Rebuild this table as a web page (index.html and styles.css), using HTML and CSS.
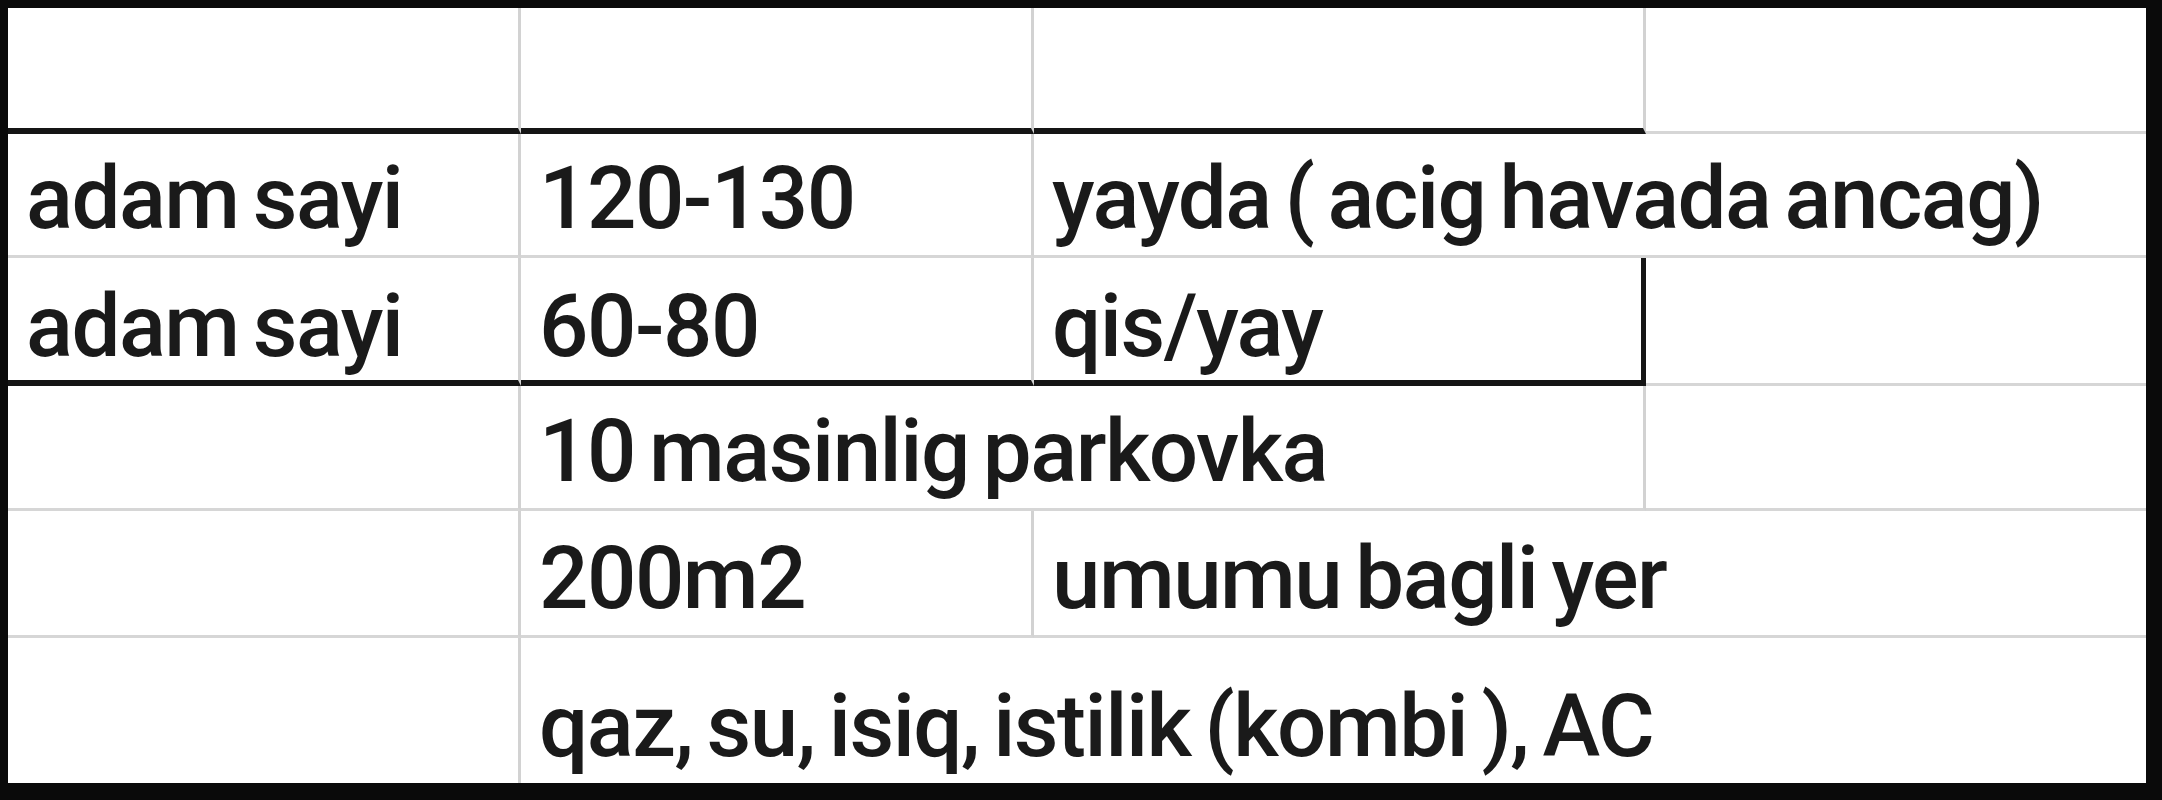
FILE: index.html
```html
<!DOCTYPE html>
<html>
<head>
<meta charset="utf-8">
<link rel="stylesheet" href="styles.css">
</head>
<body>
<div class="frame">
  <div class="sheet">
    <!-- row 1 -->
    <div class="cell r1 c1 vr"></div>
    <div class="cell r1 c2 vr"></div>
    <div class="cell r1 c3 vr"></div>
    <div class="cell r1 c4 gb"></div>
    <!-- row 2 -->
    <div class="cell r2 vr gb"><span>adam sayi</span></div>
    <div class="cell r2 vr gb"><span>120-130</span></div>
    <div class="cell r2 span2 gb"><span>yayda ( acig havada ancag)</span></div>
    <!-- row 3 -->
    <div class="cell r3 vr kb"><span>adam sayi</span></div>
    <div class="cell r3 vr kb"><span>60-80</span></div>
    <div class="cell r3 kr kb"><span>qis/yay</span></div>
    <div class="cell r3 gb"></div>
    <!-- row 4 -->
    <div class="cell r4 vr gb"></div>
    <div class="cell r4 span2 vr gb"><span>10 masinlig parkovka</span></div>
    <div class="cell r4 gb"></div>
    <!-- row 5 -->
    <div class="cell r5 vr gb"></div>
    <div class="cell r5 vr gb"><span>200m2</span></div>
    <div class="cell r5 span2 gb"><span>umumu bagli yer</span></div>
    <!-- row 6 -->
    <div class="cell r6 vr"></div>
    <div class="cell r6 span3"><span>qaz, su, isiq, istilik (kombi ), AC</span></div>
  </div>
</div>
</body>
</html>
```

FILE: styles.css
```css
html, body {
  margin: 0;
  padding: 0;
  background: #000;
}

.frame {
  width: 2162px;
  height: 800px;
  box-sizing: border-box;
  border-style: solid;
  border-color: #0a0a0a;
  border-width: 8px 16px 17px 8px;
  background: #fff;
}

.sheet {
  display: grid;
  grid-template-columns: 513px 513px 612px 500px;
  grid-template-rows: 126px 124px 128px 125px 127px 145px;
  background: #fff;
  font-family: Roboto, "Liberation Sans", sans-serif;
  font-size: 87px;
  font-weight: 500;
  letter-spacing: -1.5px;
  word-spacing: -6px;
  color: #1a1a1a;
}

.cell {
  box-sizing: border-box;
  display: flex;
  align-items: flex-end;
  padding: 0 0 13px 18px;
  line-height: 1;
  white-space: nowrap;
  overflow: visible;
}

.vr { border-right: 3px solid #d2d2d2; }
.gb { border-bottom: 3px solid #d6d6d6; }
.kb { border-bottom: 6px solid #151515; padding-bottom: 10px; }
.kr { border-right: 5px solid #151515; }

.r1.c1, .r1.c2, .r1.c3 { border-bottom: 6px solid #151515; }

.span2 { grid-column: span 2; }
.span3 { grid-column: span 3; }
```
